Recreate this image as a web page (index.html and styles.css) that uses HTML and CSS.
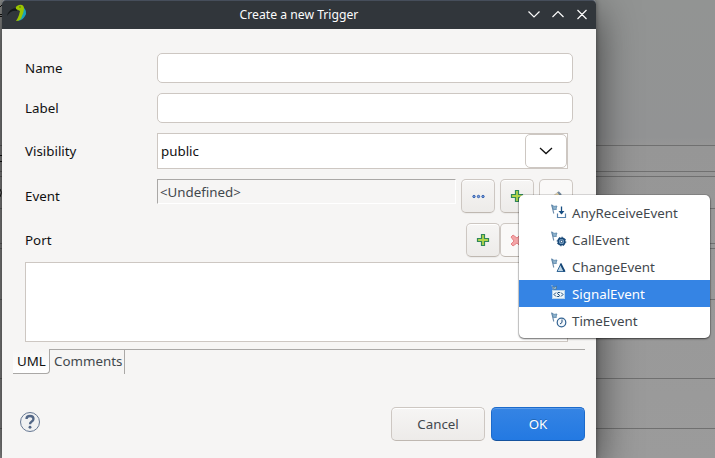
FILE: index.html
```html
<!DOCTYPE html>
<html lang="en">
<head>
<meta charset="utf-8">
<title>Create a new Trigger</title>
<link rel="stylesheet" href="styles.css">
</head>
<body>
<svg class="backdrop" width="715" height="458" viewBox="0 0 715 458" aria-hidden="true">
  <defs>
    <linearGradient id="base" x1="0" y1="0" x2="0" y2="1"><stop offset="0" stop-color="#929493"/><stop offset=".3" stop-color="#929394"/><stop offset=".32" stop-color="#969696"/><stop offset="1" stop-color="#9b9b9b"/></linearGradient>
  </defs>
  <rect width="715" height="458" fill="url(#base)"/>
  <path d="M0 145.500H715M0 171.500H715M0 176.500H715M0 208.500H715M0 243.500H715M0 248.500H715M0 299.500H715M0 378.500H715M0 428.500H715" stroke="#707070"/>
  <path d="M0 14.500H3M0 16.500H3M0 155.500H3M0 161.500H3M0 7l3-3" stroke="#111"/>
  <path d="M0 189q3 3 0 8" fill="none" stroke="#222"/>
</svg>
<main class="dialog">
  <header class="titlebar">
    <svg class="logo" width="22" height="20" viewBox="0 0 22 20"><path d="M1 12Q3 4 11 4L11 7Q5 6 1 12" fill="#15191b"/><path d="M17 3q5 4 2 9-2 4-7 5l4-8z" fill="#1ba2b8"/><path d="M10 5q-1-3 3-4 5-1 5 4-.5 4-2 7-1 5-6 5 2-3 3-6l1-4z" fill="#9bc400"/><path d="M13 3h2" stroke="#587a00"/></svg>
    <h1>Create a new Trigger</h1>
    <svg class="controls" width="64" height="16" viewBox="0 0 64 16"><path d="M4.500 5.500L10 11l5.500-5.500M28.500 11L34 5.500l5.500 5.500M53.500 4l9 9M62.500 4l-9 9" fill="none" stroke="#fcfcfc" stroke-width="1.200"/></svg>
  </header>
  <form class="form">
    <div class="row name"><label for="n">Name</label><input id="n" class="entry"></div>
    <div class="row name"><label for="l">Label</label><input id="l" class="entry"></div>
    <div class="row visibility"><span class="label">Visibility</span>
      <div class="combo"><span>public</span><div class="drop"><svg width="14" height="8" viewBox="0 0 14 8"><path d="M1 1l6 5.500L13 1" fill="none" stroke="#111" stroke-width="1.300"/></svg></div></div>
    </div>
    <div class="row event"><span class="label">Event</span><div class="reference">&lt;Undefined&gt;</div>
      <div class="tools">
        <div class="tool"><svg width="16" height="16" viewBox="0 0 16 16"><g fill="#809fe0" stroke="#2859a8" stroke-width=".9"><circle cx="4" cy="8.500" r="1.200"/><circle cx="8.500" cy="8.500" r="1.200"/><circle cx="13" cy="8.500" r="1.200"/></g></svg></div>
        <div class="tool"><svg width="16" height="16" viewBox="0 0 16 16"><path d="M6.500 2.500h3v4h4v3h-4v4h-3v-4h-4v-3h4z" fill="#b3d54a" stroke="#30885b" stroke-width="1.200"/></svg></div>
        <div class="tool disabled"><svg width="16" height="16" viewBox="0 0 16 16"><path d="M2 14l2-5 6-5 2 2-6 7z" fill="#eed8a8" stroke="#b9b5ae" stroke-width=".7"/><path d="M10 4l3 3" stroke="#71889e" stroke-width="2.200"/></svg></div>
      </div>
    </div>
    <div class="row port"><span class="label">Port</span>
      <div class="tools joined">
        <div class="tool"><svg width="16" height="16" viewBox="0 0 16 16"><path d="M6.500 2.500h3v4h4v3h-4v4h-3v-4h-4v-3h4z" fill="#b3d54a" stroke="#30885b" stroke-width="1.200"/></svg></div>
        <div class="tool disabled"><svg width="16" height="16" viewBox="0 0 16 16"><path d="M2 5l2-2 4 3 3-3 2 2-3 4 3 4-2 1-3-3-4 3-2-2 3-3z" fill="#f3a4a6" stroke="#e58186"/></svg></div>
      </div>
    </div>
    <div class="list"></div>
  </form>
  <nav class="tabs"><span class="tab active">UML</span><span class="tab">Comments</span></nav>
  <footer class="actions">
    <svg class="help" width="22" height="22" viewBox="0 0 22 22"><circle cx="11" cy="11" r="9.500" fill="#f0f1f2" stroke="#657792"/><path d="M7.500 8q0-3 3.500-3t3.500 3q0 1.500-2 2.700-1.500.9-1.500 2.500" fill="none" stroke="#536786" stroke-width="2.300"/><circle cx="11" cy="16.300" r="1.450" fill="#536786"/></svg>
    <button class="button" type="button">Cancel</button><button class="button primary" type="button">OK</button>
  </footer>
</main>
<svg width="0" height="0" class="defs"><defs><g id="flag"><path d="M.6 .5L2.800 9.500" stroke="#6d8dac" stroke-width="1.100"/><path d="M1 1.300l2.200 1 2.800-.3-.8 2.200.3 1.200-3.200.3z" fill="#8fb3cc" stroke="#4f7da4" stroke-width=".7"/></g></defs></svg>
<div class="menu">
  <div class="item"><svg width="16" height="16" viewBox="0 0 16 16"><use href="#flag"/><path d="M10.500 2.500v7" stroke="#154d82" stroke-width="1.300"/><path d="M7.500 7h6l-3 3.500z" fill="#154d82"/><path d="M6.500 9.500v4h8v-4" fill="none" stroke="#5682ad" stroke-width="1.200"/></svg><span>AnyReceiveEvent</span></div>
  <div class="item"><svg width="16" height="16" viewBox="0 0 16 16"><use href="#flag"/><circle cx="10.500" cy="10.500" r="3.300" fill="#7ca2c4" stroke="#164777" stroke-width="1.500"/><circle cx="10.500" cy="10.500" r="4.300" fill="none" stroke="#164777" stroke-dasharray="1.700 1.600"/><circle cx="10.500" cy="10.500" r="1.200" fill="#fff" stroke="#164777"/></svg><span>CallEvent</span></div>
  <div class="item"><svg width="16" height="16" viewBox="0 0 16 16"><use href="#flag"/><path d="M9.500 6.500l-3.500 7h8z" fill="#bed5e5" stroke="#376a99"/><path d="M9.500 5.500l4 8" stroke="#164777" stroke-width="1.800"/></svg><span>ChangeEvent</span></div>
  <div class="item selected"><svg width="16" height="16" viewBox="0 0 16 16"><path d="M.8 0l1.700 5" stroke="#a7c1d6"/><path d="M1.500 1.500l2 .7 2-1.200v3l-3 .5z" fill="#9fbdce" stroke="#416e94" stroke-width=".7"/><rect x="1.500" y="5.500" width="12" height="8" fill="#edf5fa" stroke="#b8d3ea"/><path d="M5 7.500L3 9.500l2 2M10 7.500l2 2-2 2M8.800 7.500H7q-1 1 0 1.800l1 .4q1 .8 0 1.800H6.200" fill="none" stroke="#164777"/></svg><span>SignalEvent</span></div>
  <div class="item"><svg width="16" height="16" viewBox="0 0 16 16"><use href="#flag"/><circle cx="10.500" cy="10.500" r="4.300" fill="#f3f8fc" stroke="#316292" stroke-width="1.200"/><path d="M11 7.500v3L9 12" fill="none" stroke="#1c4776"/></svg><span>TimeEvent</span></div>
</div>
</body>
</html>
```
FILE: styles.css
```css
* { box-sizing: border-box; }
body { margin: 0; width: 715px; height: 458px; overflow: hidden; font: 13.333px/18px "Noto Sans", sans-serif; color: #111; }
svg { display: block; flex: none; }
.backdrop { position: absolute; inset: 0; z-index: -1; }
.defs { position: absolute; }
.dialog { width: 594px; height: 458px; margin-left: 2px; overflow: visible; background: #f6f5f4; border-radius: 4px 4px 0 0; box-shadow: 0 12px 42px rgba(0,0,0,.62), 0 0 5px rgba(0,0,0,.4); }
.titlebar { height: 29px; display: grid; grid-template-columns: 75px 1fr 75px; align-items: center; background: #31363b; border-top: 1px solid #464e5b; border-radius: 4px 4px 0 0; }
.logo { margin: -2px 0 0 4px; }
.titlebar h1 { margin: -1px 0 0; font-size: 12.2px; font-weight: 400; line-height: 18px; color: #fcfcfc; text-align: center; }
.controls { margin-left: 3px; margin-top: -2px; }
.form { margin: 0; padding: 24px 0 0 23px; height: 320px; }
.row { display: flex; }
.row > label, .label { width: 132px; flex: none; }
.name { height: 30px; margin-bottom: 10px; align-items: center; }
.entry { width: 416px; height: 30px; padding: 0 5px; border: 1px solid #cdc7c2; border-radius: 5px; background: #fff; font: inherit; }
.visibility { height: 36px; align-items: center; }
.combo { width: 411px; height: 36px; padding: 0 0 0 3px; display: flex; align-items: center; justify-content: space-between; border: 1px solid #cdc7c2; background: #fff; }
.drop { width: 42px; height: 34px; display: grid; place-items: center; border: 1px solid #cdc7c2; border-radius: 5px; background: #fff; }
.event { height: 34px; margin-top: 10px; }
.event .label { padding-top: 8px; }
.reference { width: 299px; height: 25px; padding: 3px 2px; border: 1px solid; border-color: #aaa8a6 #fff #fff #aaa8a6; color: #42484d; }
.tools { display: flex; gap: 5px; margin-left: 5px; }
.tool { width: 34px; height: 34px; display: grid; place-items: center; border: 1px solid #cdc7c2; border-bottom-color: #bfb8b1; border-radius: 5px; background: linear-gradient(#f6f5f4, #edebe9); box-shadow: inset 0 1px #fff, 0 1px 1px #0000000c; }
.tool.disabled { background: #faf9f8; box-shadow: none; }
.port { height: 34px; margin-top: 10px; }
.port .label { width: 441px; padding-top: 8px; }
.joined { gap: 0; margin: 0; }
.list { width: 543px; height: 80px; margin-top: 5px; border: 1px solid #cdc7c2; background: #fff; }
.tabs { height: 25px; margin: 0 11px; display: flex; border-top: 1px solid #aaa8a6; }
.tab { height: 24px; padding: 2px 4px; border-right: 1px solid #aaa8a6; color: #42484d; }
.tab.active { width: 37px; margin-top: -1px; height: 25px; padding-top: 3px; background: linear-gradient(#f6f5f4, #fff); border-bottom: 1px solid #aaa8a6; border-bottom-right-radius: 4px; color: #111; }
.tab:last-child { width: 75px; }
.actions { display: flex; align-items: center; height: 34px; margin: 33px 11px 0 17px; }
.help { margin: -4px auto 0 0; }
.button { width: 94px; height: 34px; padding: 0; border: 1px solid #cdc7c2; border-bottom-color: #bfb8b1; border-radius: 5px; background: linear-gradient(#f6f5f4, #edebe9); box-shadow: inset 0 1px #fff; color: #42484d; font: inherit; }
.button.primary { margin-left: 6px; color: #fff; background: linear-gradient(#3584e4, #2379e2); border-color: #1b6acb; border-bottom-color: #15539e; box-shadow: inset 0 1px #5b9be9; text-shadow: 0 -1px #164d8580; }
.menu { position: absolute; left: 519px; top: 195px; width: 191px; height: 143px; padding: 4px 0; background: #fff; border-radius: 5px; box-shadow: 0 0 0 1px #0000001c, 0 1px 2px #0008; color: #42484d; }
.item { height: 27px; display: flex; align-items: center; gap: 5px; padding-left: 32px; }
.item svg { margin-top: -1px; }
.item span { padding-top: 1px; }
.item.selected { color: #fff; background: #3584e4; }
```
